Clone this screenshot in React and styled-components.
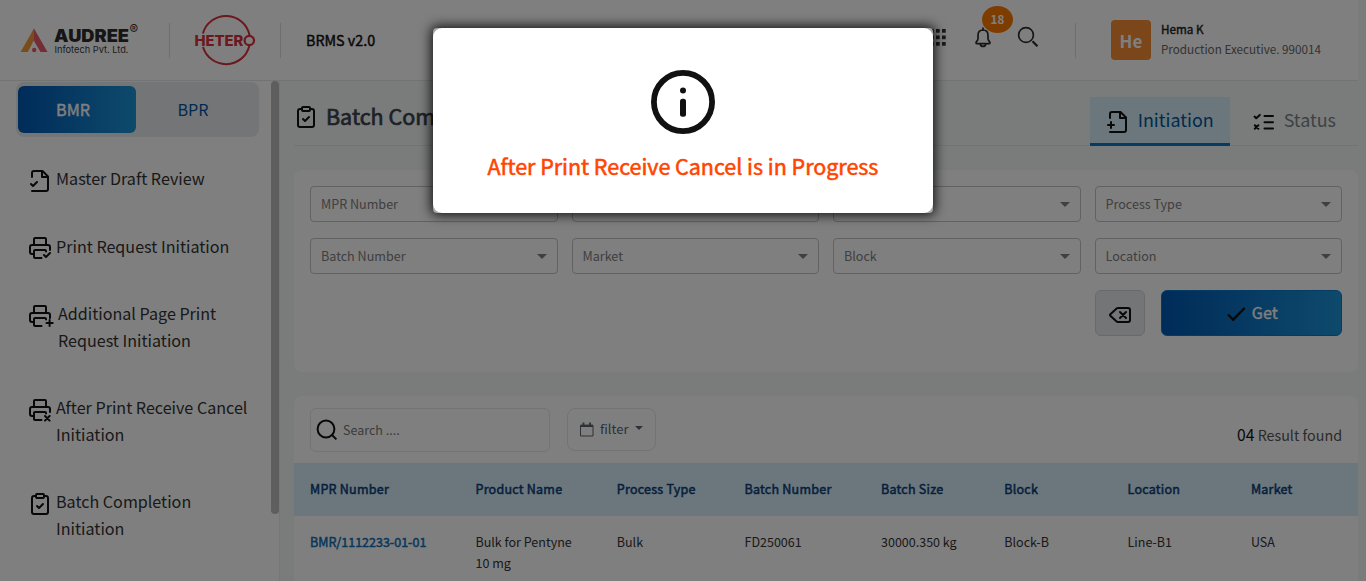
import React from "react";
import styled, { createGlobalStyle, css } from "styled-components";

const fs = (n) => `${(n / 1.117).toFixed(2)}px`;
const heavy = (w = 0.5) => css`
  -webkit-text-stroke: ${w}px currentColor;
`;

const Global = createGlobalStyle`
  * { box-sizing: border-box; }
  body { margin: 0; overflow: hidden; background: #f3f9f7;
    font-family: "Noto Sans CJK SC", "Noto Sans", sans-serif; color: #333; }
  svg { display: block; flex: none; }
`;

const Page = styled.div`
  position: relative;
  width: 1366px;
  height: 581px;
  overflow: hidden;
`;

/* ---------- header ---------- */
const Header = styled.header`
  display: flex;
  align-items: center;
  width: 1358px;
  height: 81px;
  padding: 0 37px 0 20px;
  background: #fff;
  border-bottom: 1px solid #e4e8e8;
`;
const Divider = styled.div`
  width: 1px;
  height: 35px;
  background: #dcdcdc;
`;
const Logo = styled.div`
  margin: 0 ${(p) => p.$r || 0}px 0 ${(p) => p.$l || 0}px;
`;
const Product = styled.div`
  width: 90px;
  margin-left: 25px;
  line-height: 24px;
  font-size: ${fs(16)};
  color: #111;
  ${heavy(0.45)}
`;
const Tools = styled.div`
  display: flex;
  align-items: center;
  gap: 25px;
  margin: 0 36px 6px auto;
`;
const Bell = styled.div`
  position: relative;
  margin-left: 2px;
`;
const Badge = styled.span`
  position: absolute;
  left: 8px;
  top: -20px;
  width: 31px;
  height: 27px;
  border-radius: 50%;
  background: #fb7a00;
  color: #fff;
  font-size: ${fs(13)};
  font-weight: 700;
  line-height: 25px;
  text-align: center;
`;
const User = styled.div`
  display: flex;
  align-items: center;
  gap: 10px;
  margin-left: 35px;
`;
const Avatar = styled.div`
  width: 40px;
  height: 40px;
  border-radius: 4px;
  background: #f68c32;
  color: #fff;
  font-size: ${fs(19)};
  font-weight: 700;
  line-height: 41px;
  text-align: center;
`;
const UserText = styled.div`
  padding-bottom: 2px;
  font-size: ${fs(13.07)};
  line-height: 20px;
  white-space: nowrap;
  color: #666;
  b {
    display: block;
    font-weight: 400;
    color: #222;
    ${heavy(0.4)}
  }
`;

/* ---------- body ---------- */
const Body = styled.div`
  display: flex;
  height: 500px;
`;
const Sidebar = styled.aside`
  display: flex;
  width: 280px;
  background: #fff;
  border-right: 1px solid #e6eeee;
`;
const SideContent = styled.div`
  width: 271px;
  padding: 1px 12px 0 16px;
`;
const Scrollbar = styled.div`
  width: 8px;
  height: 433px;
  border-radius: 4px;
  background: #bcbcbc;
`;
const Toggle = styled.div`
  display: flex;
  height: 55px;
  padding: 4px 2px;
  border-radius: 8px;
  background: #e7eaee;
`;
const ToggleItem = styled.div`
  width: ${(p) => (p.$active ? 118 : 114)}px;
  height: 47px;
  padding-right: ${(p) => (p.$active ? 8 : 0)}px;
  border-radius: 6px;
  font-size: ${fs(18)};
  line-height: 47px;
  text-align: center;
  color: ${(p) => (p.$active ? "#fff" : "#00559f")};
  ${(p) =>
    p.$active &&
    css`
      background: linear-gradient(90deg, #0058b3, #1c94d8);
      ${heavy(0.4)}
    `}
`;
const Nav = styled.nav`
  padding: 28.47px 0 0 12px;
`;
const NavItem = styled.div`
  display: flex;
  align-items: flex-start;
  gap: 4px;
  margin-bottom: 40.06px;
  font-size: ${fs(18)};
  line-height: 27px;
  white-space: pre-line;
  color: #333;
  svg {
    margin-top: 3.95px;
    margin-bottom: -1px;
  }
`;
const Main = styled.main`
  width: 1086px;
  padding: 16px 8px 0 14px;
`;
const TitleBar = styled.div`
  display: flex;
  align-items: stretch;
  height: 49px;
  border-bottom: 1px solid #e2e8e8;
`;
const Title = styled.h1`
  display: flex;
  align-items: center;
  gap: 8px;
  margin: 0 auto 10px 0;
  font-size: ${fs(24)};
  font-weight: 400;
  line-height: 30px;
  color: #3c4350;
  ${heavy(0.7)}
  svg {
    margin-top: 2px;
  }
`;
const Tab = styled.div`
  display: flex;
  align-items: center;
  gap: 8px;
  height: 49px;
  padding: 0 ${(p) => (p.$active ? 16 : 22)}px 2px;
  font-size: ${fs(20)};
  line-height: 44px;
  color: ${(p) => (p.$active ? "#005694" : "#7d8388")};
  background: ${(p) => (p.$active ? "#d6eefb" : "none")};
  border-bottom: 3px solid ${(p) => (p.$active ? "#0d76c8" : "transparent")};
  svg {
    margin-top: 6px;
  }
`;
const Card = styled.section`
  height: ${(p) => p.$h}px;
  margin-top: 24px;
  border-radius: 8px;
  background: #fff;
`;
const Filters = styled.div`
  display: grid;
  grid-template-columns: repeat(4, 1fr);
  gap: 16px 14px;
  padding: 16px;
`;
const Select = styled.div`
  display: flex;
  align-items: center;
  justify-content: space-between;
  height: 36px;
  padding: 0 10px;
  border: 1px solid #c4c4c4;
  border-radius: 4px;
  font-size: ${fs(14.05)};
  line-height: 34px;
  color: #808080;
`;
const Caret = styled.i`
  border: ${(p) => p.$s || 5}px solid transparent;
  border-top-color: ${(p) => p.$c || "#808080"};
  border-bottom: 0;
`;
const Actions = styled.div`
  grid-column: 4;
  display: flex;
  gap: 16px;
`;
const ClearButton = styled.div`
  display: flex;
  align-items: center;
  justify-content: center;
  width: 50px;
  height: 46px;
  padding-top: 3px;
  border: 1px solid #cfd3d8;
  border-radius: 6px;
  background: #e7eaee;
`;
const GetButton = styled.div`
  display: flex;
  flex: 1;
  align-items: center;
  justify-content: center;
  gap: 6px;
  height: 46px;
  padding: 0 0 2px 1px;
  border: 1px solid #0d76c8;
  border-radius: 6px;
  background: linear-gradient(90deg, #0058b3, #1c94d8);
  color: #fff;
  font-size: ${fs(18)};
  line-height: 42px;
  ${heavy(0.35)}
  svg {
    margin-top: 3px;
  }
`;
const ListBar = styled.div`
  display: flex;
  height: 67px;
  padding: 12px 16px;
`;
const Search = styled.div`
  display: flex;
  align-items: center;
  gap: 4px;
  width: 240px;
  height: 44px;
  padding-left: 4px;
  border: 1px solid #e6e6e6;
  border-radius: 6px;
  font-size: ${fs(14)};
  line-height: 20px;
  color: #777;
`;
const FilterButton = styled.div`
  display: flex;
  align-items: center;
  width: 89px;
  height: 43px;
  margin-left: 17px;
  padding: 0 0 2px 12px;
  border: 1px solid #e6e6e6;
  border-radius: 8px;
  font-size: ${fs(14.6)};
  line-height: 20px;
  color: #5c636a;
  svg {
    margin: 1px 6px 0 0;
  }
  i {
    margin: 0 0 1px 6px;
  }
`;
const Results = styled.div`
  margin: 13px 0 0 auto;
  font-size: ${fs(16)};
  line-height: 28px;
  color: #555;
  span {
    font-size: ${fs(17.5)};
    color: #111;
  }
`;
const Row = styled.div`
  display: grid;
  grid-template-columns: 165.5px 141.3px 127.7px 136.5px 123.3px 123.3px 123.3px 1fr;
  padding: 15px 0 0 16px;
  height: ${(p) => (p.$head ? 53 : 80)}px;
  font-size: ${fs(14)};
  line-height: 21px;
  white-space: pre-line;
  color: ${(p) => (p.$head ? "#0f3f78" : "#333")};
  background: ${(p) => (p.$head ? "#d6eefb" : "none")};
  ${(p) =>
    p.$head &&
    css`
      letter-spacing: 0.24px;
      ${heavy(0.5)}
    `}
`;
const Link = styled.span`
  color: #1470b8;
  ${heavy(0.5)}
`;

/* ---------- modal ---------- */
const Backdrop = styled.div`
  position: absolute;
  inset: 0;
  display: flex;
  justify-content: center;
  align-items: flex-start;
  padding-top: 28px;
  background: rgba(0, 0, 0, 0.5);
`;
const ModalFrame = styled.div`
  width: 500px;
  height: 185px;
  border-radius: 4px;
  background: #a6a6a6;
  box-shadow: 0 0 12px 2px rgba(0, 0, 0, 0.85);
`;
const Modal = styled.div`
  display: flex;
  flex-direction: column;
  align-items: center;
  height: 100%;
  padding-top: 42px;
  border-radius: 9px;
  background: #fff;
`;
const Message = styled.div`
  margin-top: 16px;
  font-size: ${fs(24)};
  line-height: 32px;
  white-space: nowrap;
  letter-spacing: -0.02px;
  color: #ff4500;
  ${heavy(0.55)}
`;

/* ---------- icons ---------- */
const Icon = ({ children, w = 24, h = 24, vb, sw = 2, color = "#111", cap = "round" }) => (
  <svg width={w} height={h} viewBox={vb || `0 0 ${w} ${h}`} fill="none" stroke={color}
    strokeWidth={sw} strokeLinecap={cap} strokeLinejoin={cap === "round" ? "round" : "miter"}>
    {children}
  </svg>
);
const FileBase = () => (
  <>
    <path d="M4 22h14a2 2 0 0 0 2-2V7.5L14.5 2H6a2 2 0 0 0-2 2v4" />
    <path d="M14 2v6h6" />
  </>
);
const FileCheck = () => <Icon><FileBase /><path d="m3 15 2 2 4-4" /></Icon>;
const FilePlus = () => <Icon><FileBase /><path d="M2 15h6M5 12v6" /></Icon>;
const Clipboard = () => (
  <Icon>
    <rect x="8" y="2" width="8" height="4" rx="1" />
    <path d="M16 4h2a2 2 0 0 1 2 2v14a2 2 0 0 1-2 2H6a2 2 0 0 1-2-2V6a2 2 0 0 1 2-2h2" />
    <path d="m9 14 2 2 4-4" />
  </Icon>
);
const PrinterBase = ({ children, w }) => (
  <Icon w={w}>
    <path d="M6 9V3a1 1 0 0 1 1-1h10a1 1 0 0 1 1 1v6" />
    <path d="M6 18H4a2 2 0 0 1-2-2v-5a2 2 0 0 1 2-2h16a2 2 0 0 1 2 2v3" />
    <path d="M13.5 22H7a1 1 0 0 1-1-1v-6a1 1 0 0 1 1-1h10a1 1 0 0 1 1 1v.5" />
    {children}
  </Icon>
);
const PrinterCheck = () => <PrinterBase><path d="m16 19 2 2 4-4" /></PrinterBase>;
const PrinterPlus = () => <PrinterBase w={26}><path d="M18.5 19h6.2M21.6 16v6" /></PrinterBase>;
const PrinterX = () => <PrinterBase><path d="m17 18 4.6 4.6M21.6 18 17 22.6" /></PrinterBase>;
const Checklist = () => (
  <Icon>
    <path d="M12.5 6H21M12.5 12.3H21M12.5 18.6H21" />
    <path d="m2.500 6.600 1.700 1.600L7.800 4.900M2.800 15.200l3.600 3.600M6.400 15.200l-3.600 3.600" />
  </Icon>
);
const Backspace = () => (
  <Icon>
    <path d="M10 5a2 2 0 0 0-1.344.519l-6.328 5.74a1 1 0 0 0 0 1.481l6.328 5.741A2 2 0 0 0 10 19h10a2 2 0 0 0 2-2V7a2 2 0 0 0-2-2z" />
    <path d="m12 9 6 6M18 9l-6 6" />
  </Icon>
);
const Tick = () => <Icon w={20} h={16} sw={2.4} cap="butt"><path d="m2 8.5 5.2 5.2L18.6 2" /></Icon>;
const Grid = () => (
  <svg width="17" height="17" viewBox="0 0 17 17" fill="#333">
    {[0, 6.5, 13].map((y) => [0, 6, 12].map((x) => (
      <rect key={`${x}-${y}`} x={x} y={y} width="3.7" height="3.7" />
    )))}
  </svg>
);
const BellIcon = () => (
  <Icon w={18} h={22} sw={1.7} color="#2c2c2c">
    <path d="M9 4C5.8 4 4 6.3 4 9.4v3.4c0 1.4-.8 2.2-1.5 2.900-.8.8-.6 1.900.6 1.900h11.800c1.200 0 1.400-1.100.6-1.900-.7-.7-1.500-1.500-1.500-2.900V9.400C14 6.300 12.200 4 9 4z" />
    <path d="M9 2v2M6.200 18c.5 3.200 5.100 3.200 5.600 0" />
  </Icon>
);
const SearchThin = () => (
  <Icon w={22} h={22} sw={1.7} color="#2c2c2c" cap="butt">
    <circle cx="9" cy="9" r="7.4" /><path d="m15.500 15.200 5 5" strokeWidth="2.2" />
  </Icon>
);
const SearchIcon = () => (
  <Icon w={24} h={24} cap="butt"><circle cx="11" cy="11" r="8.4" /><path d="m16.800 16.800 4.600 4.600" /></Icon>
);
const Calendar = () => (
  <Icon w={14} h={15} sw={1} color="#5c636a" cap="butt">
    <path d="M.5 3.500h12.500v10.500H.5z" /><path d="M.5 3.800h12.500" strokeWidth="2.4" />
    <path d="M3.500 .6v4M10 .6v4" strokeWidth="1.8" />
  </Icon>
);
const Info = () => (
  <svg width="64" height="64" viewBox="0 0 64 64" fill="#111">
    <circle cx="32" cy="32" r="29.1" fill="none" stroke="#111" strokeWidth="5.8" />
    <circle cx="32" cy="20.5" r="3" />
    <rect x="29" y="28.8" width="6" height="18" rx="2.5" />
  </svg>
);
const AudreeLogo = () => (
  <svg width="120" height="36" viewBox="0 0 120 36" fontFamily="Inter, sans-serif">
    <path d="M14 6.600 27.500 30H20.500L11 14z" fill="#e85a6a" />
    <path d="M14 6.600 .6 30h7.200L14 18z" fill="#f39a34" />
    <circle cx="14.2" cy="28" r="2.2" fill="#e85a6a" />
    <text x="34" y="19.700" fontSize="17" fontWeight="900" fill="#2c2c2c" textLength="75" lengthAdjust="spacingAndGlyphs">AUDREE</text>
    <text x="34.5" y="30.6" fontSize="9.2" fill="#3a3a3a" textLength="74" lengthAdjust="spacingAndGlyphs">Infotech Pvt. Ltd.</text>
    <text x="109.6" y="12" fontSize="13" fontWeight="500" fill="#333">®</text>
  </svg>
);
const HeteroLogo = () => (
  <svg width="62" height="52" viewBox="0 0 62 52" fontFamily="Inter, sans-serif">
    <path d="M8.900 19.500A24 24 0 0 1 55.600 21.500M55.300 31.900A24 24 0 0 1 9 33" fill="none" stroke="#d6303c" strokeWidth="2" />
    <text x=".4" y="31.5" fontSize="14.2" fontWeight="800" fill="#d6303c" textLength="49" lengthAdjust="spacingAndGlyphs">HETER</text>
    <circle cx="55.3" cy="26.5" r="4.7" fill="none" stroke="#d6303c" strokeWidth="2.2" />
  </svg>
);

const navItems = [
  [FileCheck, "Master Draft Review"],
  [PrinterCheck, "Print Request Initiation"],
  [PrinterPlus, "Additional Page Print\nRequest Initiation"],
  [PrinterX, "After Print Receive Cancel\nInitiation"],
  [Clipboard, "Batch Completion\nInitiation"],
];
const selects = ["MPR Number", "Product Name", "Batch Size", "Process Type", "Batch Number", "Market", "Block", "Location"];
const columns = ["MPR Number", "Product Name", "Process Type", "Batch Number", "Batch Size", "Block", "Location", "Market"];
const record = ["Bulk for Pentyne\n10 mg", "Bulk", "FD250061", "30000.350 kg", "Block-B", "Line-B1", "USA"];

export default function App() {
  return (
    <Page>
      <Global />
      <Header>
        <Logo $r={29}><AudreeLogo /></Logo>
        <Divider />
        <Logo $l={24} $r={24}><HeteroLogo /></Logo>
        <Divider />
        <Product>BRMS v2.0</Product>
        <Tools>
          <Grid />
          <Bell><BellIcon /><Badge>18</Badge></Bell>
          <SearchThin />
        </Tools>
        <Divider />
        <User>
          <Avatar>He</Avatar>
          <UserText><b>Hema K</b>Production Executive. 990014</UserText>
        </User>
      </Header>
      <Body>
        <Sidebar>
          <SideContent>
            <Toggle>
              <ToggleItem $active>BMR</ToggleItem>
              <ToggleItem>BPR</ToggleItem>
            </Toggle>
            <Nav>
              {navItems.map(([Glyph, label]) => (
                <NavItem key={label}><Glyph /><span>{label}</span></NavItem>
              ))}
            </Nav>
          </SideContent>
          <Scrollbar />
        </Sidebar>
        <Main>
          <TitleBar>
            <Title><Clipboard />Batch Completion</Title>
            <Tab $active><FilePlus />Initiation</Tab>
            <Tab><Checklist />Status</Tab>
          </TitleBar>
          <Card $h={202}>
            <Filters>
              {selects.map((s) => <Select key={s}>{s}<Caret /></Select>)}
              <Actions>
                <ClearButton><Backspace /></ClearButton>
                <GetButton><Tick />Get</GetButton>
              </Actions>
            </Filters>
          </Card>
          <Card $h={240}>
            <ListBar>
              <Search><SearchIcon />Search ....</Search>
              <FilterButton><Calendar />filter<Caret $s={4} $c="#5c636a" /></FilterButton>
              <Results><span>04</span> Result found</Results>
            </ListBar>
            <Row $head>{columns.map((c) => <span key={c}>{c}</span>)}</Row>
            <Row>
              <Link>BMR/1112233-01-01</Link>
              {record.map((c) => <span key={c}>{c}</span>)}
            </Row>
          </Card>
        </Main>
      </Body>
      <Backdrop>
        <ModalFrame>
          <Modal><Info /><Message>After Print Receive Cancel is in Progress</Message></Modal>
        </ModalFrame>
      </Backdrop>
    </Page>
  );
}
